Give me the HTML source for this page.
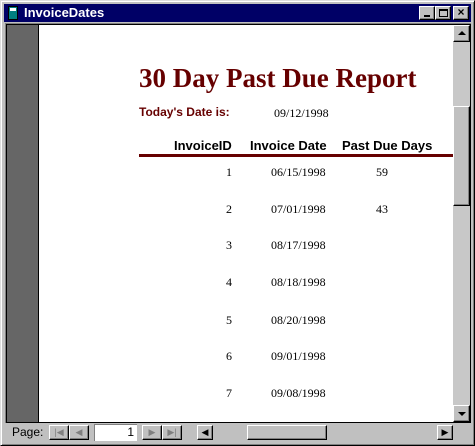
<!DOCTYPE html>
<html><head><style>
*{margin:0;padding:0;box-sizing:border-box}
body{width:475px;height:446px;background:#c0c0c0;position:relative;overflow:hidden;font-family:"Liberation Sans",sans-serif}
.a{position:absolute}
.btn{position:absolute;background:#c0c0c0;border-top:1px solid #fff;border-left:1px solid #fff;border-right:1px solid #000;border-bottom:1px solid #000;box-shadow:inset -1px -1px 0 #808080}
.s{font-family:"Liberation Serif",serif;font-size:12px;color:#000}
.h{font-weight:bold;font-size:13px;color:#000}
</style></head><body>
<div class="a" style="left:0;top:0;width:475px;height:446px;border-top:1px solid #dfdfdf;border-left:1px solid #dfdfdf;border-right:1px solid #000;border-bottom:1px solid #000;box-shadow:inset 1px 1px 0 #fff,inset -1px -1px 0 #808080"></div>
<div class="a" style="left:4px;top:4px;width:467px;height:18px;background:#000066"></div>
<div class="a" style="left:8px;top:6px;width:10px;height:14px;background:#008080;border:1px solid #000"></div>
<div class="a" style="left:10px;top:8px;width:6px;height:3px;background:#fff"></div>
<div class="a" style="left:24px;top:5px;color:#fff;font-weight:bold;font-size:13px">InvoiceDates</div>
<div class="btn" style="left:419px;top:6px;width:16px;height:14px"><div class="a" style="left:4px;top:8px;width:6px;height:2px;background:#000"></div></div>
<div class="btn" style="left:435px;top:6px;width:16px;height:14px"><div class="a" style="left:3px;top:2px;width:9px;height:8px;border:1px solid #000;border-top-width:2px"></div></div>
<div class="btn" style="left:453px;top:6px;width:16px;height:14px;font-size:12px;font-weight:bold;line-height:11px;text-align:center">×</div>
<div class="a" style="left:5px;top:23px;width:466px;height:400px;border-top:1px solid #808080;border-left:1px solid #808080;background:#000"></div>
<div class="a" style="left:7px;top:25px;width:31px;height:397px;background:#666"></div>
<div class="a" style="left:39px;top:25px;width:414px;height:397px;background:#fff"></div>
<div class="a" style="left:453px;top:25px;width:17px;height:397px;background:#c8c8c8"></div>
<div class="btn" style="left:453px;top:25px;width:17px;height:17px"><div class="a" style="left:4px;top:5px;border-left:4px solid transparent;border-right:4px solid transparent;border-bottom:4px solid #000"></div></div>
<div class="btn" style="left:453px;top:106px;width:17px;height:100px"></div>
<div class="btn" style="left:453px;top:405px;width:17px;height:17px"><div class="a" style="left:4px;top:6px;border-left:4px solid transparent;border-right:4px solid transparent;border-top:4px solid #000"></div></div>

<div class="a" style="left:139px;top:63px;font-family:'Liberation Serif',serif;font-weight:bold;font-size:27px;color:#660000;white-space:nowrap">30 Day Past Due Report</div>
<div class="a" style="left:139px;top:105px;font-weight:bold;font-size:12px;color:#660000">Today's Date is:</div>
<div class="a s" style="left:274px;top:106px">09/12/1998</div>
<div class="a h" style="left:174px;top:138px">InvoiceID</div>
<div class="a h" style="left:250px;top:138px">Invoice Date</div>
<div class="a h" style="left:342px;top:138px">Past Due Days</div>
<div class="a" style="left:139px;top:154px;width:314px;height:3px;background:#660000"></div>

<div class="a s" style="left:226px;top:165px">1</div><div class="a s" style="left:271px;top:165px">06/15/1998</div><div class="a s" style="left:376px;top:165px">59</div>
<div class="a s" style="left:226px;top:202px">2</div><div class="a s" style="left:271px;top:202px">07/01/1998</div><div class="a s" style="left:376px;top:202px">43</div>
<div class="a s" style="left:226px;top:238px">3</div><div class="a s" style="left:271px;top:238px">08/17/1998</div>
<div class="a s" style="left:226px;top:275px">4</div><div class="a s" style="left:271px;top:275px">08/18/1998</div>
<div class="a s" style="left:226px;top:313px">5</div><div class="a s" style="left:271px;top:313px">08/20/1998</div>
<div class="a s" style="left:226px;top:349px">6</div><div class="a s" style="left:271px;top:349px">09/01/1998</div>
<div class="a s" style="left:226px;top:386px">7</div><div class="a s" style="left:271px;top:386px">09/08/1998</div>

<div class="a" style="left:6px;top:423px;width:464px;height:18px;background:#c0c0c0"></div>
<div class="a" style="left:12px;top:425px;font-size:12px">Page:</div>
<div class="btn" style="left:49px;top:425px;width:20px;height:15px;font-size:9px;color:#808080;text-align:center;line-height:13px">|◀</div>
<div class="btn" style="left:69px;top:425px;width:20px;height:15px;font-size:9px;color:#808080;text-align:center;line-height:13px">◀</div>
<div class="a" style="left:94px;top:424px;width:43px;height:17px;background:#fff;border-top:1px solid #808080;border-left:1px solid #808080;font-size:12px;text-align:right;padding-right:3px;line-height:15px">1</div>
<div class="btn" style="left:142px;top:425px;width:20px;height:15px;font-size:9px;color:#808080;text-align:center;line-height:13px">▶</div>
<div class="btn" style="left:162px;top:425px;width:20px;height:15px;font-size:9px;color:#808080;text-align:center;line-height:13px">▶|</div>
<div class="btn" style="left:197px;top:425px;width:16px;height:15px;font-size:9px;text-align:center;line-height:13px">◀</div>
<div class="btn" style="left:247px;top:425px;width:80px;height:15px"></div>
<div class="btn" style="left:437px;top:425px;width:16px;height:15px;font-size:9px;text-align:center;line-height:13px">▶</div>
</body></html>
